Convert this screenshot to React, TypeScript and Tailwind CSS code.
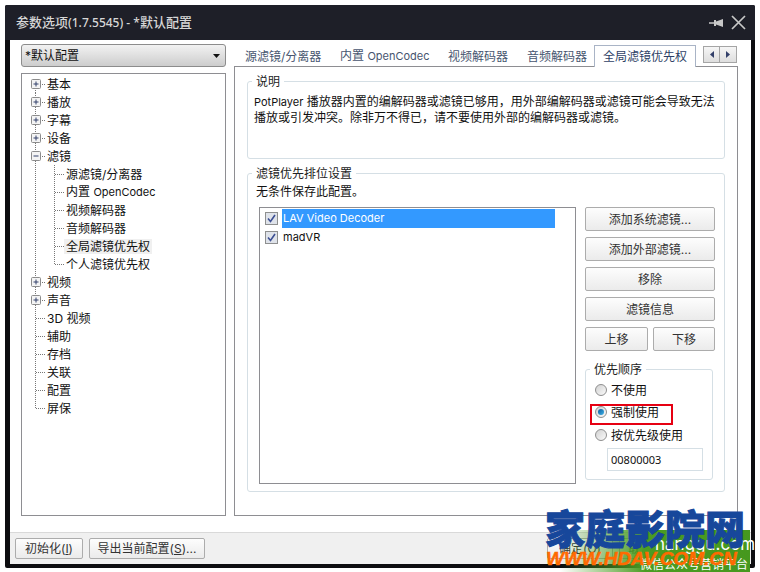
import React from "react";

function Btn({ className = "", children }: { className?: string; children: React.ReactNode }) {
  return (
    <div className={`flex items-center justify-center rounded-[2px] border border-[#acacac] bg-gradient-to-b from-[#fdfdfd] to-[#ebebeb] text-[#333] ${className}`}>
      {children}
    </div>
  );
}

function Box({ open }: { open?: boolean }) {
  return (
    <g>
      <rect x="9.5" y="4.5" width="9" height="9" fill="#f4f4f4" stroke="#8c8c8c" rx="1" />
      <path d="M11.5 9h5" stroke="#33406a" strokeWidth="1" />
      {!open && <path d="M14 6.5v5" stroke="#33406a" strokeWidth="1" />}
    </g>
  );
}

const dot = { stroke: "#777", strokeDasharray: "1 1", strokeWidth: 1 };

function Top({ label, kind, first, last }: { label: React.ReactNode; kind: "plus" | "minus" | "leaf"; first?: boolean; last?: boolean }) {
  return (
    <div className="flex h-[18px] items-center">
      <svg width="25" height="18" className="shrink-0">
        <path d={`M13.5 ${first ? 9 : 0}V${last ? 9 : 18}`} {...dot} />
        <path d="M14 9.5H24" {...dot} />
        {kind !== "leaf" && <Box open={kind === "minus"} />}
      </svg>
      <span>{label}</span>
    </div>
  );
}

function Child({ label, last, selected }: { label: React.ReactNode; last?: boolean; selected?: boolean }) {
  return (
    <div className="flex h-[18px] items-center">
      <svg width="42" height="18" className="shrink-0">
        <path d="M13.5 0V18" {...dot} />
        <path d={`M32.5 0V${last ? 9 : 18}`} {...dot} />
        <path d="M33 9.5H42" {...dot} />
      </svg>
      <span className={`px-[2px] ${selected ? "bg-[#f0f0f0]" : ""}`}>{label}</span>
    </div>
  );
}

function Group({ label, className = "", children }: { label: string; className?: string; children: React.ReactNode }) {
  return (
    <div className={`rounded-[3px] border border-[#d5dfe5] ${className}`}>
      <div className="ml-[4px] -mt-[9px] h-[18px] w-fit bg-white px-[4px] leading-[18px] text-[#222]">{label}</div>
      {children}
    </div>
  );
}

function Radio({ on }: { on?: boolean }) {
  return (
    <span className="flex h-[12px] w-[12px] shrink-0 items-center justify-center rounded-full border border-[#8e8e8e] bg-gradient-to-br from-[#d2d2d2] to-[#fafafa]">
      {on && <span className="h-[6px] w-[6px] rounded-full bg-gradient-to-br from-[#0d5a9c] to-[#3fb4e8]" />}
    </span>
  );
}

function Check() {
  return (
    <svg width="13" height="13" className="shrink-0">
      <rect x="0.5" y="0.5" width="12" height="12" fill="#dfe3ea" stroke="#8e8f8f" />
      <path d="M3 6.5 5.5 9.5 10 3" fill="none" stroke="#3c4f93" strokeWidth="1.6" />
    </svg>
  );
}

const OpenCodec = (
  <>
    内置 <span className="text-[11px]">OpenCodec</span>
  </>
);

const tabs: [React.ReactNode, string][] = [
  ["源滤镜/分离器", "w-[95px]"],
  [OpenCodec, "w-[108px]"],
  ["视频解码器", "w-[79px]"],
  ["音频解码器", "w-[78px]"],
];

export default function App() {
  return (
    <div className="relative h-[572px] w-[760px] overflow-hidden bg-white pl-[5px] pt-[5px] text-[12px] leading-[15px] text-[#111] [font-family:'Inter','Noto_Sans_CJK_SC',sans-serif]">
      <div className="flex h-[563px] w-[750px] flex-col rounded-[2px] bg-[#0d0d10] pb-[4px] pl-[5px] pr-[4px]">
        {/* title */}
        <div className="-ml-[5px] -mr-[4px] flex h-[35px] shrink-0 items-center justify-between rounded-t-[2px] bg-[#1e1f28] pl-[11px] pr-[9px] text-[13px] font-medium text-[#d6d6d6]">
          <span>
            参数选项<span className="text-[12px] [font-family:'Noto_Sans',sans-serif]">(1.7.5545) - *</span>默认配置
          </span>
          <div className="flex items-center gap-[6px]">
            <svg width="16" height="12" viewBox="0 0 16 12">
              <path d="M0 6h6" stroke="#c8c8c8" strokeWidth="1.5" />
              <path d="M5 3h2V4.5L14 2V10L7 7.5V9H5Z" fill="#c8c8c8" />
            </svg>
            <svg width="15" height="15" viewBox="0 0 15 15">
              <path d="M1 1 14 14M14 1 1 14" stroke="#c8c8c8" strokeWidth="1.7" />
            </svg>
          </div>
        </div>
        {/* client */}
        <div className="flex min-h-0 flex-1 flex-col bg-white">
          <div className="flex h-[492px] pl-[11px] pt-[4px]">
            {/* left */}
            <div className="flex w-[205px] shrink-0 flex-col gap-[6px]">
              <div className="flex h-[23px] items-center justify-between rounded-[3px] border border-[#8c8c8c] bg-gradient-to-b from-[#f2f2f2] to-[#cdcdcd] pl-[3px] pr-[4px] text-[#111]">
                <span>*默认配置</span>
                <svg width="7" height="4" className="mr-[1px]">
                  <path d="M0 0H7L3.5 4Z" fill="#111" />
                </svg>
              </div>
              <div className="h-[443px] border border-[#8e8e92] bg-white pt-px text-[#111]">
                <Top label="基本" kind="plus" first />
                <Top label="播放" kind="plus" />
                <Top label="字幕" kind="plus" />
                <Top label="设备" kind="plus" />
                <Top label="滤镜" kind="minus" />
                <Child label="源滤镜/分离器" />
                <Child label={OpenCodec} />
                <Child label="视频解码器" />
                <Child label="音频解码器" />
                <Child label="全局滤镜优先权" selected />
                <Child label="个人滤镜优先权" last />
                <Top label="视频" kind="plus" />
                <Top label="声音" kind="plus" />
                <Top label="3D 视频" kind="leaf" />
                <Top label="辅助" kind="leaf" />
                <Top label="存档" kind="leaf" />
                <Top label="关联" kind="leaf" />
                <Top label="配置" kind="leaf" />
                <Top label="屏保" kind="leaf" last />
              </div>
            </div>
            {/* right */}
            <div className="ml-[8px] w-[504px] shrink-0 pt-px">
              <div className="flex h-[21px] items-end">
                {tabs.map(([t, w], i) => (
                  <div key={i} className={`${w} flex h-[20px] shrink-0 items-center whitespace-pre pl-[11px] text-[#47556f]`}>
                    <span>{t}</span>
                  </div>
                ))}
                <div className="relative z-10 -mb-px flex h-[22px] w-[102px] shrink-0 items-center justify-center border border-b-0 border-[#a9b4c6] bg-white text-[#2e3f66]">
                  全局滤镜优先权
                </div>
                <div className="mb-[3px] ml-[7px] flex h-[17px] self-end">
                  <div className="flex h-[17px] w-[17px] items-center justify-center border border-[#a5a5a5] bg-gradient-to-b from-[#f6f6f6] to-[#dedede]">
                    <svg width="4" height="7"><path d="M4 0V7L0 3.5Z" fill="#33406a" /></svg>
                  </div>
                  <div className="flex h-[17px] w-[17px] items-center justify-center border border-l-0 border-[#a5a5a5] bg-gradient-to-b from-[#f6f6f6] to-[#dedede]">
                    <svg width="4" height="7"><path d="M0 0V7L4 3.5Z" fill="#33406a" /></svg>
                  </div>
                </div>
              </div>
              <div className="h-[450px] border border-[#8e8e92] bg-white pl-[12px] pt-[14px]">
                <Group label="说明" className="h-[78px] w-[478px]">
                  <p className="pl-[6px] pt-[3px] text-[#111]">
                    <span className="text-[11px]">PotPlayer</span> 播放器内置的编解码器或滤镜已够用，用外部编解码器或滤镜可能会导致无法
                    <br />
                    播放或引发冲突。除非万不得已，请不要使用外部的编解码器或滤镜。
                  </p>
                </Group>
                <Group label="滤镜优先排位设置" className="mt-[14px] h-[319px] w-[478px]">
                  <div className="pl-[8px] pt-[1px] text-[#111]">无条件保存此配置。</div>
                  <div className="flex pl-[11px] pt-[8px]">
                    <div className="h-[277px] w-[317px] shrink-0 border border-[#8e8e92] pl-[5px] pt-[1px]">
                      <div className="flex h-[19px] items-center gap-[4px]">
                        <Check />
                        <div className="flex h-[19px] w-[273px] items-center bg-[#3399ff] pl-[1px] text-[11px] text-white">LAV Video Decoder</div>
                      </div>
                      <div className="flex h-[19px] items-center gap-[4px]">
                        <Check />
                        <div className="pl-[1px] text-[11px]">madVR</div>
                      </div>
                    </div>
                    <div className="ml-[9px] flex w-[130px] shrink-0 flex-col gap-[6px]">
                      <Btn className="h-[24px]">添加系统滤镜...</Btn>
                      <Btn className="h-[24px]">添加外部滤镜...</Btn>
                      <Btn className="h-[24px]">移除</Btn>
                      <Btn className="h-[24px]">滤镜信息</Btn>
                      <div className="flex gap-[5px]">
                        <Btn className="h-[24px] w-[63px]">上移</Btn>
                        <Btn className="h-[24px] w-[62px]">下移</Btn>
                      </div>
                      <Group label="优先顺序" className="mt-[12px] h-[111px] w-[128px]">
                        <div className="relative pl-[9px] pt-[2px]">
                          <div className="flex h-[18px] items-center gap-[4px] text-[#111]"><Radio />不使用</div>
                          <div className="mt-[4px] flex h-[18px] items-center gap-[4px] text-[#111]"><Radio on />强制使用</div>
                          <div className="mt-[5px] flex h-[18px] items-center gap-[4px] text-[#111]"><Radio />按优先级使用</div>
                          <div className="absolute left-[4px] top-[25px] h-[21px] w-[83px] border-2 border-[#e60012]" />
                          <div className="ml-[12px] mt-[4px] flex h-[23px] w-[96px] items-center border border-[#d5dfe5] pl-[3px] text-[11px] text-[#111] [font-family:'Noto_Sans',sans-serif]">00800003</div>
                        </div>
                      </Group>
                    </div>
                  </div>
                </Group>
              </div>
            </div>
          </div>
          {/* footer */}
          <div className="flex h-[32px] shrink-0 items-start justify-between border-t border-[#d9d9d9] bg-[#f0f0f0] pl-[5px] pr-[6px] pt-[5px]">
            <div className="flex gap-[6px]">
              <Btn className="h-[21px] w-[68px]">初始化(<span className="underline">I</span>)</Btn>
              <Btn className="h-[21px] w-[116px]">导出当前配置(<span className="underline">S</span>)...</Btn>
            </div>
            <div className="flex gap-[6px]">
              <Btn className="h-[21px] w-[66px]">确定(O)</Btn>
              <Btn className="h-[21px] w-[60px]">取消(C)</Btn>
              <Btn className="h-[21px] w-[60px]">应用(A)</Btn>
            </div>
          </div>
        </div>
      </div>

      {/* watermark */}
      <div className="absolute left-[560px] top-[530px] h-[42px] w-[190px] bg-gradient-to-r from-[#ffffff00] via-[#4b9c22] via-45% to-[#46981e]" />
      <div className="absolute left-[655px] top-[533px] whitespace-nowrap text-[17px] leading-[22px] text-white">nanggu.com</div>
      <div className="absolute left-[640px] top-[558px] whitespace-nowrap text-[12px] leading-[13px] text-white">微信公众号营销平台</div>
      <div className="absolute left-[545px] top-[503px] whitespace-nowrap text-[40px] font-black leading-[48px] text-[#17479b] [-webkit-text-stroke:1px_#17479b] [font-family:'Noto_Sans_CJK_SC',sans-serif]">家庭影院网</div>
      <div className="absolute left-[546px] top-[548px] whitespace-nowrap text-[19px] font-bold italic leading-[22px] text-[#ff6a00] [-webkit-text-stroke:0.5px_#ff6a00] [font-family:'Liberation_Sans',sans-serif]">WWW.HDAV.COM.CN</div>
    </div>
  );
}
